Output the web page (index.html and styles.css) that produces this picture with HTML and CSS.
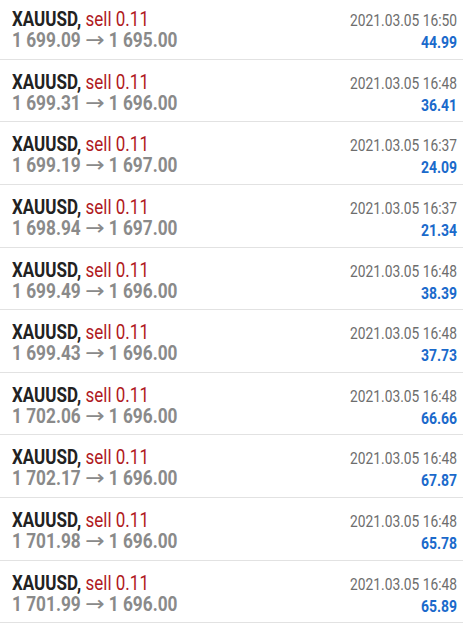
FILE: index.html
```html
<!DOCTYPE html>
<html lang="en">

<head>
    <meta charset="UTF-8">
    <meta name="viewport" content="width=device-width, initial-scale=1.0">
    <title>History</title>
    <link rel="stylesheet" href="styles.css">
</head>

<body>
    <ul class="deals">
        <li class="deal">
            <div class="left">
                <span class="symbol">XAUUSD, <b class="sell">sell 0.11</b></span>
                <span class="prices">1 699.09 <i class="arrow">&rarr;</i> 1 695.00</span>
            </div>
            <div class="right">
                <span class="time">2021.03.05 16:50</span>
                <span class="profit">44.99</span>
            </div>
        </li>
        <li class="deal">
            <div class="left">
                <span class="symbol">XAUUSD, <b class="sell">sell 0.11</b></span>
                <span class="prices">1 699.31 <i class="arrow">&rarr;</i> 1 696.00</span>
            </div>
            <div class="right">
                <span class="time">2021.03.05 16:48</span>
                <span class="profit">36.41</span>
            </div>
        </li>
        <li class="deal">
            <div class="left">
                <span class="symbol">XAUUSD, <b class="sell">sell 0.11</b></span>
                <span class="prices">1 699.19 <i class="arrow">&rarr;</i> 1 697.00</span>
            </div>
            <div class="right">
                <span class="time">2021.03.05 16:37</span>
                <span class="profit">24.09</span>
            </div>
        </li>
        <li class="deal">
            <div class="left">
                <span class="symbol">XAUUSD, <b class="sell">sell 0.11</b></span>
                <span class="prices">1 698.94 <i class="arrow">&rarr;</i> 1 697.00</span>
            </div>
            <div class="right">
                <span class="time">2021.03.05 16:37</span>
                <span class="profit">21.34</span>
            </div>
        </li>
        <li class="deal">
            <div class="left">
                <span class="symbol">XAUUSD, <b class="sell">sell 0.11</b></span>
                <span class="prices">1 699.49 <i class="arrow">&rarr;</i> 1 696.00</span>
            </div>
            <div class="right">
                <span class="time">2021.03.05 16:48</span>
                <span class="profit">38.39</span>
            </div>
        </li>
        <li class="deal">
            <div class="left">
                <span class="symbol">XAUUSD, <b class="sell">sell 0.11</b></span>
                <span class="prices">1 699.43 <i class="arrow">&rarr;</i> 1 696.00</span>
            </div>
            <div class="right">
                <span class="time">2021.03.05 16:48</span>
                <span class="profit">37.73</span>
            </div>
        </li>
        <li class="deal">
            <div class="left">
                <span class="symbol">XAUUSD, <b class="sell">sell 0.11</b></span>
                <span class="prices">1 702.06 <i class="arrow">&rarr;</i> 1 696.00</span>
            </div>
            <div class="right">
                <span class="time">2021.03.05 16:48</span>
                <span class="profit">66.66</span>
            </div>
        </li>
        <li class="deal">
            <div class="left">
                <span class="symbol">XAUUSD, <b class="sell">sell 0.11</b></span>
                <span class="prices">1 702.17 <i class="arrow">&rarr;</i> 1 696.00</span>
            </div>
            <div class="right">
                <span class="time">2021.03.05 16:48</span>
                <span class="profit">67.87</span>
            </div>
        </li>
        <li class="deal">
            <div class="left">
                <span class="symbol">XAUUSD, <b class="sell">sell 0.11</b></span>
                <span class="prices">1 701.98 <i class="arrow">&rarr;</i> 1 696.00</span>
            </div>
            <div class="right">
                <span class="time">2021.03.05 16:48</span>
                <span class="profit">65.78</span>
            </div>
        </li>
        <li class="deal">
            <div class="left">
                <span class="symbol">XAUUSD, <b class="sell">sell 0.11</b></span>
                <span class="prices">1 701.99 <i class="arrow">&rarr;</i> 1 696.00</span>
            </div>
            <div class="right">
                <span class="time">2021.03.05 16:48</span>
                <span class="profit">65.89</span>
            </div>
        </li>
    </ul>
</body>

</html>
```

FILE: styles.css
```css
body {
    margin: 0;
    background: #fff;
    font-family: Roboto, "Liberation Sans", sans-serif;
    overflow: hidden;
}

.deals {
    list-style: none;
    margin: -3px 0 0;
    padding: 0;
}

.deal {
    display: flex;
    justify-content: space-between;
    height: 62.625px;
    box-sizing: border-box;
    padding: 10px 6px 0 12px;
    border-bottom: 1px solid #e2e2e2;
}

.left,
.right {
    display: flex;
    flex-direction: column;
    white-space: nowrap;
}

.right {
    align-items: flex-end;
}

/* the app font is condensed, squeeze Roboto to its width */
.symbol,
.prices {
    transform-origin: left center;
}

.time,
.profit {
    transform-origin: right center;
}

.symbol {
    font-size: 21px;
    line-height: 24px;
    font-weight: 700;
    color: #222;
    transform: scaleX(0.81);
}

.sell {
    font-weight: 400;
    color: #b0191e;
}

.prices {
    font-size: 19.5px;
    line-height: 19px;
    font-weight: 700;
    color: #8a8a8a;
    transform: scaleX(0.885);
}

.arrow {
    display: inline-block;
    margin: 0 2.2px;
    font-family: "DejaVu Sans", sans-serif;
    font-style: normal;
    font-weight: 400;
    font-size: 21px;
    line-height: 14px;
    transform: scaleX(1.25);
}

.time {
    font-size: 17px;
    line-height: 27px;
    color: #6d6d6d;
    transform: scaleX(0.81);
}

.profit {
    font-size: 17px;
    line-height: 16px;
    font-weight: 700;
    color: #1a6acb;
    transform: scaleX(0.82);
}
```
